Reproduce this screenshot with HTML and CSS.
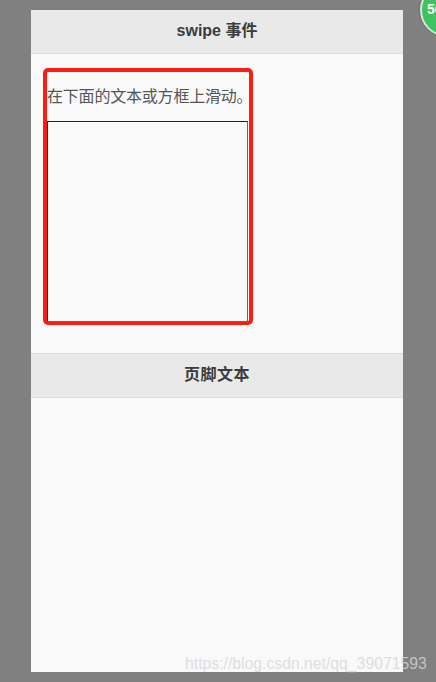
FILE: index.html
```html
<!DOCTYPE html>
<html lang="zh-CN">
    <head>
        <meta charset="UTF-8">
        <meta name="viewport" content="width=device-width, initial-scale=1.0">
        <title>swipe 事件</title>
        <link rel="stylesheet" href="styles.css">
    </head>

    <body>
        <div class="page">
            <div class="bar header">swipe 事件</div>
            <div class="content">
                <div class="mark">
                    <p class="tip">在下面的文本或方框上滑动。</p>
                    <div class="swipe-box"></div>
                </div>
            </div>
            <div class="bar footer">页脚文本</div>
        </div>
        <div class="badge"><span class="badge-num">50</span></div>
        <div class="watermark">https://blog.csdn.net/qq_39071593</div>
    </body>
</html>
```

FILE: styles.css
```css
html, body{
    height: 100%;
}
body{
    margin: 0;
    padding: 10px 33px 10px 31px;
    box-sizing: border-box;
    background-color: #808080;
    font-family: "Liberation Sans", "Noto Sans CJK SC", sans-serif;
    color: #333;
    overflow: hidden;
}
.page{
    height: 100%;
    background-color: #f9f9f9;
}
.bar{
    background-color: #e9e9e9;
    color: #3c3c3c;
    font-size: 16px;
    font-weight: bold;
    text-align: center;
    line-height: 42px;
}
.header{
    height: 43px;
    border-bottom: 1px solid #ddd;
}
.footer{
    height: 43px;
    border-top: 1px solid #ddd;
    border-bottom: 1px solid #ddd;
    letter-spacing: 0.5px;
}
.content{
    height: 299px;
    padding: 14px 0 0 12px;
    box-sizing: border-box;
}
.mark{
    width: 210px;
    height: 257px;
    box-sizing: border-box;
    border: 4px solid #fb1d12;
    border-radius: 5px;
}
.tip{
    margin: 0;
    padding-top: 14px;
    height: 49px;
    box-sizing: border-box;
    color: #555;
    font-size: 16px;
    line-height: 22px;
    letter-spacing: -0.2px;
    white-space: nowrap;
}
.swipe-box{
    width: 201px;
    height: 201px;
    box-sizing: border-box;
    border: 1px solid #222;
    border-bottom-color: #666;
    border-right-color: #666;
}
.badge{
    position: absolute;
    left: 420px;
    top: -17px;
    width: 54px;
    height: 54px;
    box-sizing: border-box;
    border: 2px solid #d9e6dc;
    border-radius: 50%;
    background-color: #3fc25f;
    box-shadow: 0 0 2px #555;
}
.badge-num{
    position: absolute;
    left: 5px;
    top: 16px;
    color: #fff;
    font-size: 14px;
    font-weight: bold;
}
.watermark{
    position: absolute;
    left: 185px;
    top: 655px;
    color: rgba(215, 215, 215, 0.8);
    font-size: 15.75px;
    white-space: nowrap;
}
```
